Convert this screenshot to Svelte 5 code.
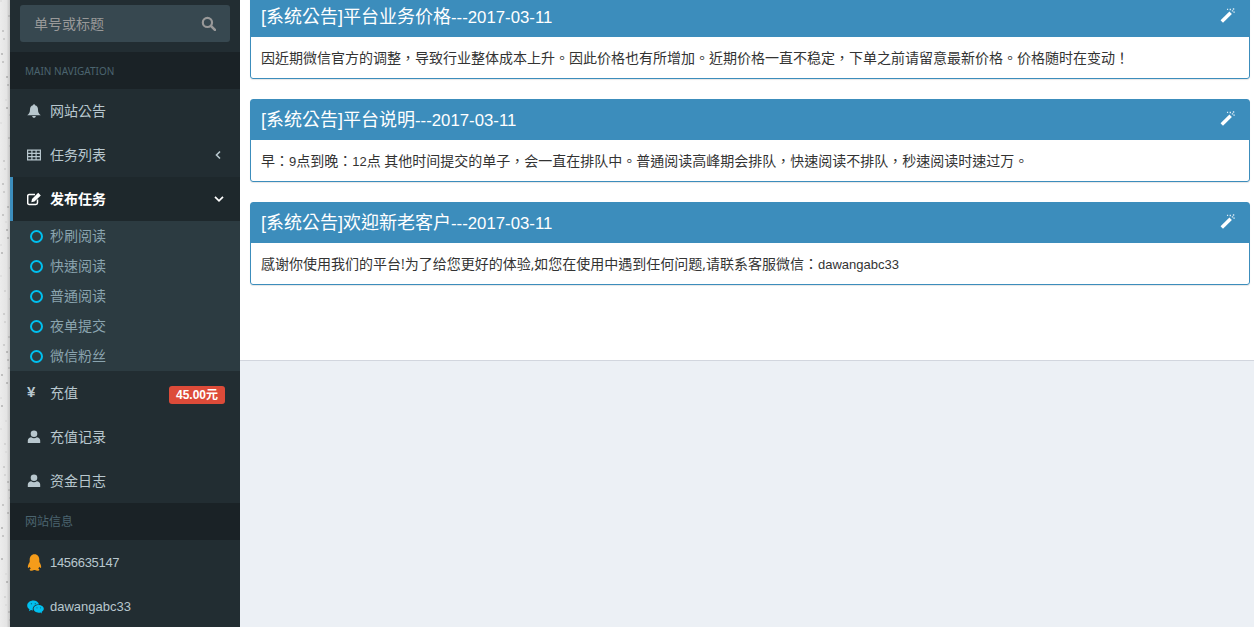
<script>
  const subItems = ['秒刷阅读', '快速阅读', '普通阅读', '夜单提交', '微信粉丝'];

  const notices = [
    {
      title: '[系统公告]平台业务价格',
      date: '---2017-03-11',
      body: '因近期微信官方的调整，导致行业整体成本上升。因此价格也有所增加。近期价格一直不稳定，下单之前请留意最新价格。价格随时在变动！'
    },
    {
      title: '[系统公告]平台说明',
      date: '---2017-03-11',
      body: '早：9点到晚：12点 其他时间提交的单子，会一直在排队中。普通阅读高峰期会排队，快速阅读不排队，秒速阅读时速过万。'
    },
    {
      title: '[系统公告]欢迎新老客户',
      date: '---2017-03-11',
      body: '感谢你使用我们的平台!为了给您更好的体验,如您在使用中遇到任何问题,请联系客服微信：dawangabc33'
    }
  ];

  // latin runs are set a bit smaller than the chinese around them
  const runs = (text) => text.split(/([A-Za-z0-9]+)/);

  // speckles of the page background that shows left of the sidebar
  const specks = Array.from({ length: 60 }, (_, i) => ({
    x: (i * 37) % 10,
    y: (i * 71 + (i % 7) * 13) % 627,
    o: 0.04 + ((i * 3) % 5) * 0.035
  }));
</script>

{#snippet user()}
  <svg class="ico user" viewBox="0 0 14 14"><circle cx="7" cy="3.800" r="3.300" fill="currentColor"/><path d="M.8 13V10.500C.8 8.500 2.500 7.500 4.200 7.200 5 7.900 6 8.200 7 8.200S9 7.900 9.800 7.200C11.500 7.500 13.200 8.500 13.200 10.500V13Z" fill="currentColor"/></svg>
{/snippet}

<div class="page">
  <svg class="strip" viewBox="0 0 10 627" width="10" height="627">
    {#each specks as s}
      <rect x={s.x} y={s.y} width="2" height="2" fill="#000" opacity={s.o} />
    {/each}
  </svg>

  <aside class="sidebar">
    <div class="search">
      <div class="search-box">
        <span class="txt">单号或标题</span>
        <svg viewBox="0 0 14 14" width="15" height="15"><circle cx="6" cy="6" r="4.300" fill="none" stroke="currentColor" stroke-width="2"/><path d="M9.200 9.200 13 13" stroke="currentColor" stroke-width="2.400" stroke-linecap="round"/></svg>
      </div>
    </div>

    <div class="heading latin">MAIN NAVIGATION</div>

    <a class="item">
      <svg class="ico bell" viewBox="0 0 14 14"><path d="M7 0.300C7.600 0.300 8 .7 8 1.200 10 1.700 11 3.500 11 5.500 11 8.500 12 9.800 13.800 11.200H.2C2 9.800 3 8.500 3 5.500 3 3.500 4 1.700 6 1.200 6 .7 6.400.3 7 .3ZM5.200 12H8.800C8.800 13 8 13.800 7 13.800S5.200 13 5.200 12Z" fill="currentColor"/></svg>
      <span class="txt">网站公告</span>
    </a>
    <a class="item">
      <svg class="ico" viewBox="0 0 14 14"><path d="M0 1.500H14V12.500H0ZM1.200 2.700V4.800H4.300V2.700ZM5.500 2.700V4.800H8.500V2.700ZM9.700 2.700V4.800H12.800V2.700ZM1.200 6V8H4.300V6ZM5.500 6V8H8.500V6ZM9.700 6V8H12.800V6ZM1.200 9.200V11.300H4.300V9.200ZM5.500 9.200V11.300H8.500V9.200ZM9.700 9.200V11.300H12.800V9.200Z" fill="currentColor" fill-rule="evenodd"/></svg>
      <span class="txt">任务列表</span>
      <svg class="chev" viewBox="0 0 8 10"><path d="M5.500 1.500 2 5l3.500 3.500" fill="none" stroke="currentColor" stroke-width="1.600"/></svg>
    </a>
    <a class="item active">
      <svg class="ico" viewBox="0 0 14 14"><path d="M10.500 7.500V10.800C10.500 11.800 9.800 12.500 8.800 12.500H2.200C1.200 12.500 .7 11.800 .7 10.800V4.200C.7 3.200 1.200 2.500 2.200 2.500H8" fill="none" stroke="currentColor" stroke-width="1.500"/><path d="M11.200 .8 13.800 3.400 7.500 9.600 4.300 10.300 5 7Z" fill="currentColor"/></svg>
      <span class="txt">发布任务</span>
      <svg class="chev down" viewBox="0 0 10 8"><path d="M1 1.800 5 5.800 9 1.800" fill="none" stroke="currentColor" stroke-width="1.700"/></svg>
    </a>

    <ul class="submenu">
      {#each subItems as label}
        <li><i class="ring"></i><span class="txt">{label}</span></li>
      {/each}
    </ul>

    <a class="item">
      <span class="yen">¥</span>
      <span class="txt">充值</span>
      <b class="badge">45.00元</b>
    </a>
    <a class="item">{@render user()}<span class="txt">充值记录</span></a>
    <a class="item">{@render user()}<span class="txt">资金日志</span></a>

    <div class="heading">网站信息</div>

    <a class="item">
      <svg class="ico qq" viewBox="0 0 14 14" preserveAspectRatio="none"><path d="M7 .3C4 .3 2.500 2.500 2.500 5V6.500C1.500 7.800.6 9.500.8 11 1 12 2 11.300 2.500 10.500 2.800 11.200 3.100 11.600 3.500 12 2.500 12.400 2.300 13 2.600 13.300 3.200 13.900 5.500 13.900 6.500 13.200H7.500C8.500 13.900 10.800 13.900 11.400 13.300 11.700 13 11.500 12.400 10.500 12 10.900 11.600 11.200 11.200 11.500 10.500 12 11.300 13 12 13.200 11 13.400 9.500 12.500 7.800 11.500 6.500V5C11.500 2.500 10 .3 7 .3Z" fill="currentColor"/></svg>
      <span class="num">1456635147</span>
    </a>
    <a class="item">
      <svg class="ico wx" viewBox="0 0 17 14"><path d="M6.500 1C3 1 .2 3.200.2 6c0 1.600.9 2.900 2.300 3.900L1.900 11.700 4 10.600C4.700 10.800 5.300 10.900 6 11 5.800 10.500 5.700 10 5.700 9.500 5.700 6.900 8.200 4.900 11.300 4.900H12C11.300 2.600 9.100 1 6.500 1Z" fill="currentColor"/><path d="M16.800 9.300C16.800 7.100 14.500 5.400 11.700 5.400S6.600 7.100 6.600 9.300 8.900 13.200 11.700 13.200C12.300 13.200 12.800 13.100 13.400 13L15 13.900 14.600 12.400C15.900 11.600 16.800 10.500 16.800 9.300Z" fill="currentColor"/><circle cx="4.400" cy="4.300" r=".7" fill="#0a6f8c"/><circle cx="8.300" cy="4.300" r=".7" fill="#0a6f8c"/><circle cx="10" cy="8.300" r=".6" fill="#0a6f8c"/><circle cx="13.500" cy="8.300" r=".6" fill="#0a6f8c"/></svg>
      <span class="wxid">dawangabc33</span>
    </a>
  </aside>

  <main class="content">
    <section class="notices">
      {#each notices as notice}
        <article class="box">
          <header class="box-head">
            <h3>{notice.title}<span class="date">{notice.date}</span></h3>
            <svg class="wand" viewBox="0 0 14 14" width="15" height="15">
              <path d="M.5 11.500 8.800 3.200 11.100 5.500 2.800 13.800Z" fill="#fff"/>
              <path d="M9 .8h1.300v1.300H9ZM12 .3h1.300v1.300H12ZM12.500 3.200h1.300v1.300h-1.300ZM11 2h1.300v1.300H11ZM6.500 .8h1.100v1.100H6.500Z" fill="#dcebf5"/>
            </svg>
          </header>
          <p>
            {#each runs(notice.body) as run, i}{#if i % 2}<span class="lat">{run}</span>{:else}{run}{/if}{/each}
          </p>
        </article>
      {/each}
    </section>
  </main>
</div>

<style>
  :global(body) {
    margin: 0;
    background: #ecf0f5;
  }

  .page {
    display: flex;
    height: 627px;
    overflow: hidden;
    font-family: "Liberation Sans", "Noto Sans CJK TC", sans-serif;
    font-size: 14px;
  }

  .strip {
    flex: 0 0 10px;
    background: linear-gradient(90deg, #ececec 0, #e4e4e4 65%, #c4c4c4 100%);
  }

  .sidebar {
    flex: 0 0 230px;
    background: #222d32;
    color: #b8c7ce;
    margin-top: -4px;
    height: 631px;
  }

  .txt {
    margin-top: -2px;
  }

  .search {
    padding: 9px 10px 10px;
    height: 37px;
  }

  .search-box {
    height: 37px;
    display: flex;
    align-items: center;
    justify-content: space-between;
    padding: 0 14px 0 14px;
    background: #374850;
    border-radius: 3px;
    color: #999;
  }

  .heading {
    height: 37px;
    line-height: 39px;
    padding-left: 15px;
    background: #1a2226;
    color: #4b646f;
    font-size: 12px;
  }

  .heading.latin {
    font-family: "Noto Sans", sans-serif;
    font-size: 10px;
  }

  .item {
    height: 44px;
    display: flex;
    align-items: center;
    padding-left: 17px;
    gap: 9px;
    color: #b8c7ce;
  }

  .item.active {
    background: #1e282c;
    color: #fff;
    font-weight: 700;
    box-shadow: inset 3px 0 0 #3c8dbc;
  }

  .ico {
    flex: 0 0 14px;
    width: 14px;
    height: 14px;
  }

  .user {
    margin-top: -1px;
  }

  .qq {
    color: #f59c1a;
    height: 17px;
    flex-basis: 15px;
    width: 15px;
    margin-right: -1px;
  }

  .wx {
    color: #00c0ef;
    width: 17px;
    height: 15px;
    flex-basis: 17px;
    margin-right: -3px;
  }

  .num {
    font-size: 13px;
    letter-spacing: -0.3px;
  }

  .wxid {
    font-size: 13px;
  }

  .yen {
    flex: 0 0 14px;
    font-weight: 700;
    font-size: 15px;
    margin-top: -3px;
  }

  .chev {
    margin-left: auto;
    margin-right: 17px;
    width: 9px;
    height: 10px;
  }

  .chev.down {
    margin-right: 16px;
    width: 10px;
  }

  .badge {
    margin-left: auto;
    margin-right: 15px;
    margin-top: 3px;
    background: #dd4b39;
    color: #fff;
    font-size: 12px;
    line-height: 18px;
    height: 18px;
    width: 56px;
    text-align: center;
    border-radius: 3px;
  }

  .submenu {
    list-style: none;
    margin: 0;
    padding: 0;
    background: #2c3b41;
    color: #8aa4af;
  }

  .submenu li {
    height: 30px;
    display: flex;
    align-items: center;
    padding-left: 20px;
  }

  .ring {
    flex: none;
    width: 9px;
    height: 9px;
    margin-right: 7px;
    border: 2px solid #00c0ef;
    border-radius: 50%;
  }

  .content {
    flex: 1;
    min-width: 0;
  }

  .notices {
    background: #fff;
    box-sizing: border-box;
    border-bottom: 1px solid #d2d6de;
    padding: 0 4px 0 10px;
    display: flex;
    flex-direction: column;
    gap: 20px;
    margin-top: -4px;
    height: 365px;
  }

  .box {
    border: 1px solid #3c8dbc;
    border-radius: 3px;
    height: 83px;
    box-sizing: border-box;
    box-shadow: 0 1px 1px rgba(0, 0, 0, 0.1);
  }

  .box-head {
    height: 40px;
    background: #3c8dbc;
    color: #fff;
    display: flex;
    align-items: center;
    justify-content: space-between;
    padding: 0 14px 0 10px;
  }

  h3 {
    margin: -5px 0 0;
    font-size: 18px;
    font-weight: 400;
  }

  .date {
    font-size: 16.800px;
  }

  .wand {
    margin-top: -4px;
  }

  p {
    margin: 0;
    padding: 11px 10px 9px;
    line-height: 20px;
    color: #333;
    font-size: 14px;
    font-family: "Open Sans", "Noto Sans CJK TC", sans-serif;
  }

  .lat {
    font-family: "Liberation Sans", sans-serif;
    font-size: 13px;
  }
</style>
